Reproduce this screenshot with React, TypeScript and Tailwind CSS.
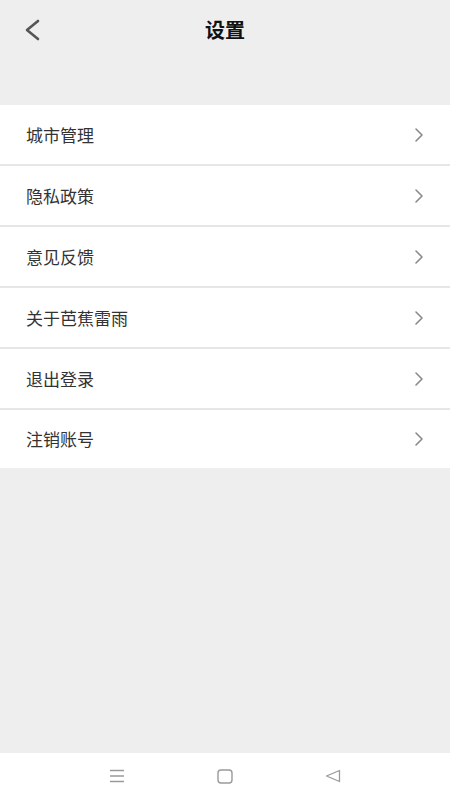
import React from "react";

const items = ["城市管理", "隐私政策", "意见反馈", "关于芭蕉雷雨", "退出登录", "注销账号"];

function Chevron() {
  return (
    <svg width="10" height="16" viewBox="0 0 10 16" fill="none">
      <path d="M2 2 L8 8 L2 14" stroke="#8a8a8a" strokeWidth="1.6" strokeLinecap="round" strokeLinejoin="round" />
    </svg>
  );
}

export default function App() {
  return (
    <div
      className="w-[450px] h-[800px] bg-[#eeeeee] flex flex-col"
      style={{ fontFamily: '"Noto Sans CJK SC", "Noto Sans", sans-serif' }}
    >
      <div className="h-[60px] relative flex items-center justify-center shrink-0">
        <svg className="absolute left-[24px] top-[19px]" width="16" height="22" viewBox="0 0 16 22" fill="none">
          <path d="M14 2 L3 11 L14 20" stroke="#555555" strokeWidth="2.6" strokeLinecap="round" strokeLinejoin="round" />
        </svg>
        <span className="text-[20px] font-bold text-[#111111] leading-none">设置</span>
      </div>
      <div className="h-[45px] shrink-0" />
      <div className="bg-white flex flex-col">
        {items.map((t, i) => (
          <div
            key={t}
            className={
              i < items.length - 1
                ? "h-[61px] flex items-center justify-between pl-[26px] pr-[26px] border-b-2 border-[#e6e6e6]"
                : "h-[58px] flex items-center justify-between pl-[26px] pr-[26px] pb-[1px]"
            }
          >
            <span className="text-[17px] text-[#333333] leading-none">{t}</span>
            <Chevron />
          </div>
        ))}
      </div>
      <div className="flex-1" />
      <div className="h-[47px] bg-white shrink-0 flex items-center justify-center gap-[92px] pb-[1px]">
        <svg width="16" height="14" viewBox="0 0 16 14" fill="none">
          <path d="M1 1.5 H15 M1 7 H15 M1 12.5 H15" stroke="#9a9a9a" strokeWidth="1.3" />
        </svg>
        <svg width="16" height="15" viewBox="0 0 16 15" fill="none">
          <rect x="1" y="1" width="14" height="13" rx="3" stroke="#9a9a9a" strokeWidth="1.4" />
        </svg>
        <svg width="16" height="14" viewBox="0 0 16 14" fill="none">
          <path d="M14.5 1.5 V12.5 L1.5 7 Z" stroke="#9a9a9a" strokeWidth="1.3" strokeLinejoin="round" />
        </svg>
      </div>
    </div>
  );
}
